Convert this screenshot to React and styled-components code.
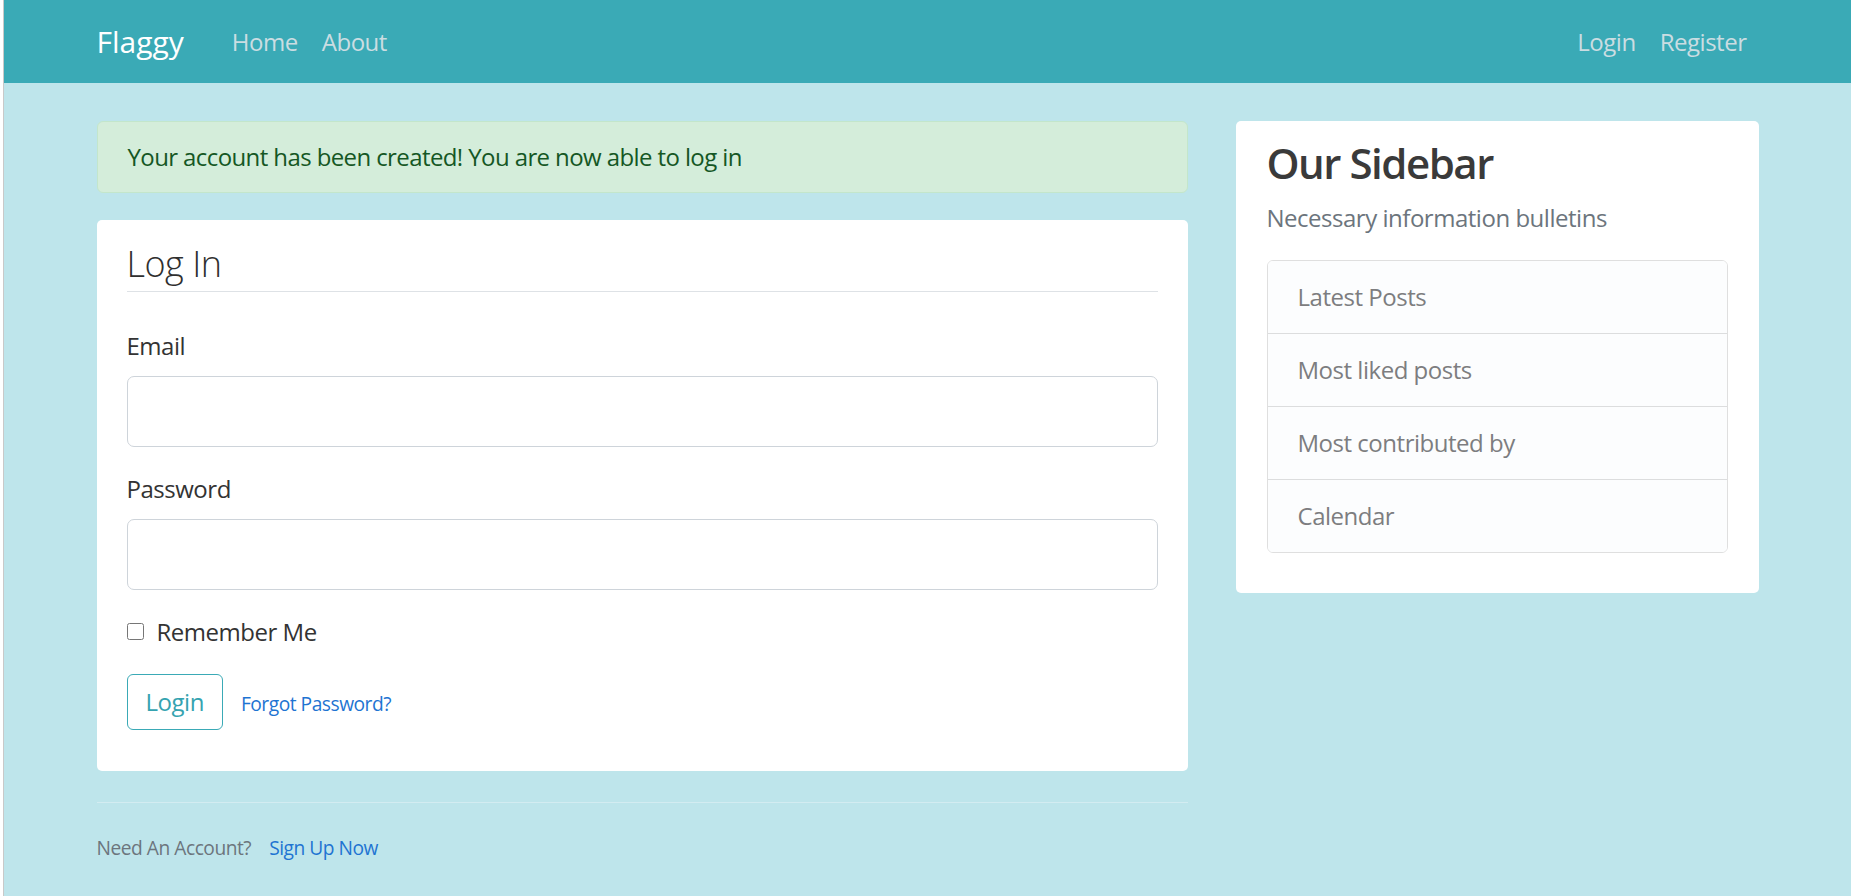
import React from "react";
import styled, { createGlobalStyle } from "styled-components";

const GlobalStyle = createGlobalStyle`
  * {
    box-sizing: border-box;
  }
  body {
    margin: 0;
    background: #ffffff;
    font-family: "Open Sans", "Noto Sans", sans-serif;
    font-size: 24px;
    line-height: 1.5;
    letter-spacing: -0.02em;
    color: #333333;
  }
`;

const Frame = styled.div`
  margin-left: 3px;
  border-left: 1px solid #c9c9c9;
  min-height: 100vh;
  background: #bee5eb;
`;

const Header = styled.header`
  background-color: #3aaab6;
  padding: 12px 0;
`;

const Container = styled.div`
  width: 1662px;
  margin: 0 auto;
`;

const NavBar = styled(Container)`
  display: flex;
  align-items: center;
`;

const Brand = styled.a`
  font-size: 30px;
  line-height: 45px;
  padding: 7px 0;
  margin-right: 36px;
  color: #ffffff;
  letter-spacing: 0;
  text-decoration: none;
`;

const NavList = styled.div`
  display: flex;
  margin-left: ${(props) => (props.right ? "auto" : "0")};
`;

const NavLink = styled.a`
  padding: 6px 12px;
  font-size: 24px;
  line-height: 36px;
  color: #cbdde2;
  text-decoration: none;
`;

const Main = styled(Container)`
  padding-top: 38px;
  display: grid;
  grid-template-columns: 1091px 523px;
  column-gap: 48px;
  align-items: start;
`;

const Column = styled.div`
  display: flex;
  flex-direction: column;
`;

const Alert = styled.div`
  background: #d4edda;
  color: #155724;
  border: 1px solid #c3e6cb;
  border-radius: 6px;
  padding: 17px 30px;
  margin-bottom: 27px;
  letter-spacing: -0.025em;
`;

const ContentSection = styled.div`
  background: #ffffff;
  border-radius: 5px;
  padding: ${(props) => (props.compact ? "17px 31px 16px" : "17px 30px 17px")};
`;

const Legend = styled.div`
  font-size: 36px;
  line-height: 54px;
  font-weight: 300;
  color: #2f2f2f;
  border-bottom: 1px solid #dee2e6;
  margin-bottom: 36px;
`;

const FormGroup = styled.div`
  margin-bottom: 24px;
`;

const Label = styled.label`
  display: block;
  margin-bottom: 12px;
  color: #333333;
`;

const Input = styled.input`
  display: block;
  width: 100%;
  height: 71px;
  padding: 12px 24px;
  font-family: inherit;
  font-size: 30px;
  color: #495057;
  background: #ffffff;
  border: 1px solid #ced4da;
  border-radius: 7px;
  outline: none;
`;

const CheckRow = styled.div`
  display: flex;
  align-items: flex-start;
  margin-bottom: 24px;
`;

const CheckBox = styled.input`
  width: 17px;
  height: 17px;
  margin: 9px 13px 0 0;
`;

const ActionRow = styled.div`
  display: flex;
  align-items: baseline;
  gap: 18px;
  margin-bottom: 24px;
`;

const OutlineButton = styled.button`
  font-family: inherit;
  font-size: 24px;
  line-height: 36px;
  letter-spacing: inherit;
  padding: 9px 18px;
  color: #35a3b0;
  background: transparent;
  border: 1px solid #3aaab6;
  border-radius: 6px;
`;

const SmallLink = styled.a`
  font-size: 19.2px;
  color: #1e74d2;
  text-decoration: none;
  margin-left: ${(props) => props.gap || "0"};
`;

const Footer = styled.div`
  margin-top: 31px;
  border-top: 1px solid #d3ecf1;
  padding-top: 31px;
  font-size: 19.2px;
  color: #6c757d;
`;

const SideTitle = styled.h3`
  margin: 0 0 12px;
  font-size: 42px;
  line-height: 1.2;
  font-weight: 600;
  letter-spacing: -0.035em;
  color: #3a3a3a;
`;

const Muted = styled.p`
  margin: 0 0 24px;
  color: #6c757d;
`;

const ListGroup = styled.ul`
  list-style: none;
  margin: 0 0 24px;
  padding: 0;
  border: 1px solid rgba(0, 0, 0, 0.125);
  border-radius: 6px;
  overflow: hidden;
`;

const ListItem = styled.li`
  padding: 18px 30px;
  background: #fcfdfe;
  color: #7d7d80;
  & + & {
    border-top: 1px solid rgba(0, 0, 0, 0.125);
  }
`;

const sidebarItems = [
  "Latest Posts",
  "Most liked posts",
  "Most contributed by",
  "Calendar",
];

const App = () => {
  return (
    <Frame>
      <GlobalStyle />
      <Header>
        <NavBar>
          <Brand href="#">Flaggy</Brand>
          <NavList>
            <NavLink href="#">Home</NavLink>
            <NavLink href="#">About</NavLink>
          </NavList>
          <NavList right>
            <NavLink href="#">Login</NavLink>
            <NavLink href="#">Register</NavLink>
          </NavList>
        </NavBar>
      </Header>
      <Main>
        <Column>
          <Alert>Your account has been created! You are now able to log in</Alert>
          <ContentSection>
            <form onSubmit={(e) => e.preventDefault()}>
              <Legend>Log In</Legend>
              <FormGroup>
                <Label htmlFor="email">Email</Label>
                <Input id="email" type="text" />
              </FormGroup>
              <FormGroup>
                <Label htmlFor="password">Password</Label>
                <Input id="password" type="password" />
              </FormGroup>
              <CheckRow>
                <CheckBox id="remember" type="checkbox" />
                <label htmlFor="remember">Remember Me</label>
              </CheckRow>
              <ActionRow>
                <OutlineButton type="submit">Login</OutlineButton>
                <SmallLink href="#">Forgot Password?</SmallLink>
              </ActionRow>
            </form>
          </ContentSection>
          <Footer>
            Need An Account?
            <SmallLink href="#" gap="18px">
              Sign Up Now
            </SmallLink>
          </Footer>
        </Column>
        <ContentSection compact>
          <SideTitle>Our Sidebar</SideTitle>
          <Muted>Necessary information bulletins</Muted>
          <ListGroup>
            {sidebarItems.map((item) => (
              <ListItem key={item}>{item}</ListItem>
            ))}
          </ListGroup>
        </ContentSection>
      </Main>
    </Frame>
  );
};

export default App;
